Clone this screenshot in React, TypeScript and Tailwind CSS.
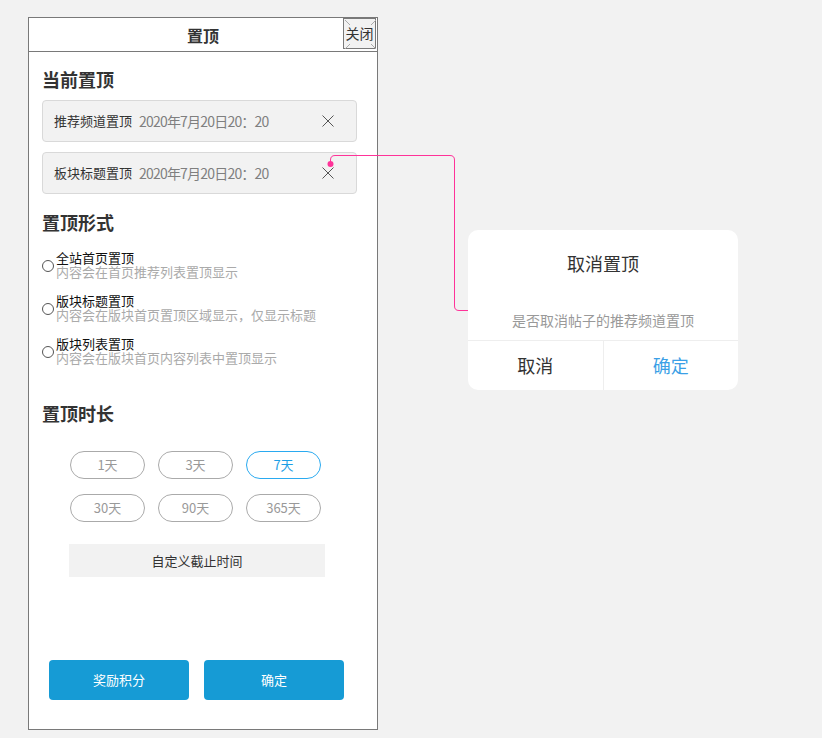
import { useState } from "react";

const font = { fontFamily: '"Noto Sans CJK SC", "Noto Sans", sans-serif' };

const durations = ["1天", "3天", "7天", "30天", "90天", "365天"];

const styles = [
  { title: "全站首页置顶", desc: "内容会在首页推荐列表置顶显示" },
  { title: "版块标题置顶", desc: "内容会在版块首页置顶区域显示，仅显示标题" },
  { title: "版块列表置顶", desc: "内容会在版块首页内容列表中置顶显示" },
];

function CloseX() {
  return (
    <svg width="12" height="12" viewBox="0 0 12 12" className="shrink-0">
      <path d="M0.5 0.5 L11.5 11.5 M11.5 0.5 L0.5 11.5" stroke="#555" strokeWidth="1" fill="none" />
    </svg>
  );
}

function PinnedCard({ label, time }: { label: string; time: string }) {
  return (
    <div className="flex h-[42px] w-[315px] items-center rounded-[4px] border border-[#d9d9d9] bg-[#f2f2f2] pl-[11px] pr-[22px]">
      <span className="text-[13px] text-[#333]">{label}</span>
      <span className="ml-[7px] text-[14px] tracking-[-0.8px] text-[#7f7f7f]">{time}</span>
      <span className="ml-auto flex">
        <CloseX />
      </span>
    </div>
  );
}

function Heading({ children, className }: { children: string; className?: string }) {
  return <div className={"h-[24px] text-[18px] font-bold leading-[24px] text-[#333] " + (className ?? "")}>{children}</div>;
}

function Radio({ title, desc }: { title: string; desc: string }) {
  return (
    <div className="flex items-center">
      <span className="mt-[2px] h-[12px] w-[12px] rounded-full border border-[#555] bg-white" />
      <div className="ml-[2px] flex flex-col">
        <span className="text-[13px] leading-[14px] text-[#111]">{title}</span>
        <span className="text-[13px] leading-[14px] text-[#aaa]">{desc}</span>
      </div>
    </div>
  );
}

export default function App() {
  const [picked, setPicked] = useState("7天");

  return (
    <div className="relative min-h-[738px] w-[822px] bg-[#f2f2f2]" style={font}>
      <div className="flex items-start pl-[28px] pt-[17px]">
        {/* phone frame */}
        <div className="flex h-[713px] w-[350px] flex-col border border-[#797979] bg-white">
          <div className="relative flex h-[34px] items-center justify-center border-b border-[#797979]">
            <span className="text-[16px] font-bold text-[#333]">置顶</span>
            <div className="absolute right-[1px] top-[0px] flex h-[31px] w-[33px] items-center justify-center border border-[#797979] bg-[#f2f2f2]">
              <svg width="33" height="31" viewBox="0 0 33 31" className="absolute left-0 top-0">
                <path d="M1 1 L6 6 M32 1 L27 6 M1 30 L6 25 M32 30 L27 25" stroke="#aaa" strokeWidth="1" fill="none" />
              </svg>
              <span className="relative text-[14px] text-[#333]">关闭</span>
            </div>
          </div>

          <div className="flex flex-1 flex-col pl-[13px]">
            <Heading className="mt-[15px]">当前置顶</Heading>
            <div className="mt-[9px] flex flex-col gap-[10px]">
              <PinnedCard label="推荐频道置顶" time="2020年7月20日20：20" />
              <PinnedCard label="板块标题置顶" time="2020年7月20日20：20" />
            </div>

            <Heading className="mt-[16px]">置顶形式</Heading>
            <div className="mt-[17px] flex flex-col gap-[15px]">
              {styles.map((s) => (
                <Radio key={s.title} title={s.title} desc={s.desc} />
              ))}
            </div>

            <Heading className="mt-[36px]">置顶时长</Heading>
            <div className="ml-[28px] mt-[26px] grid w-[251px] grid-cols-3 gap-x-[13px] gap-y-[15px]">
              {durations.map((d) => (
                <button
                  key={d}
                  onClick={() => setPicked(d)}
                  className={
                    "h-[28px] w-[75px] rounded-full border text-[13px] " +
                    (picked === d ? "border-[#2aaaf0] text-[#1e9fe6]" : "border-[#aaa] text-[#999]")
                  }
                >
                  {d}
                </button>
              ))}
            </div>
            <div className="ml-[27px] mt-[22px] flex h-[33px] w-[256px] items-center justify-center bg-[#f2f2f2] text-[13px] text-[#333]">
              自定义截止时间
            </div>

            <div className="mb-[29px] ml-[7px] mt-auto flex gap-[15px]">
              <button className="h-[40px] w-[140px] rounded-[4px] bg-[#169bd5] text-[13px] text-white">奖励积分</button>
              <button className="h-[40px] w-[140px] rounded-[4px] bg-[#169bd5] text-[13px] text-white">确定</button>
            </div>
          </div>
        </div>

        {/* confirm dialog */}
        <div className="ml-[90px] mt-[213px] flex h-[160px] w-[270px] flex-col rounded-[10px] bg-white">
          <div className="mt-[21px] text-center text-[18px] leading-[24px] text-[#333]">取消置顶</div>
          <div className="mt-[36px] text-center text-[14px] leading-[18px] text-[#999]">是否取消帖子的推荐频道置顶</div>
          <div className="mt-auto flex h-[50px] border-t border-[#eee]">
            <div className="flex flex-1 items-center justify-center border-r border-[#eee] text-[18px] text-[#333]">取消</div>
            <div className="flex flex-1 items-center justify-center text-[18px] text-[#3b9fe6]">确定</div>
          </div>
        </div>
      </div>

      {/* annotation connector */}
      <svg className="pointer-events-none absolute left-0 top-0" width="822" height="738">
        <path
          d="M330.5 164 V160 Q330.5 155.5 335 155.5 H450 Q454.5 155.5 454.5 160 V306 Q454.5 310.5 459 310.5 H468"
          stroke="#ff3399"
          strokeWidth="1"
          fill="none"
        />
        <circle cx="330.5" cy="164" r="3" fill="#ff3399" />
      </svg>
    </div>
  );
}
